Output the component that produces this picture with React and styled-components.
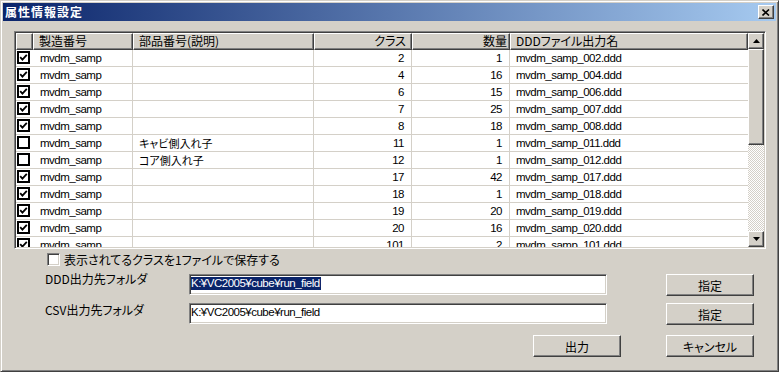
import React from 'react';
import styled, { createGlobalStyle, css } from 'styled-components';

const FACE = '#d4d0c8';
const FONT = `"Noto Sans CJK JP", "Liberation Sans", sans-serif`;
const LATIN = `"Liberation Sans", "Noto Sans CJK JP", sans-serif`;
const COLS = '17px 100px 181px 98px 98px 238px';

const Global = createGlobalStyle`
  html, body { margin: 0; padding: 0; background: ${FACE}; }
  body {
    font-family: ${FONT};
    font-size: 12px;
    color: #000;
    font-feature-settings: "palt";
  }
  * { box-sizing: border-box; }
`;

const raised = css`
  background: ${FACE};
  border: 1px solid;
  border-color: #fff #404040 #404040 #fff;
  box-shadow: inset -1px -1px #808080;
`;

const sunken = css`
  border: 1px solid;
  border-color: #808080 #fff #fff #808080;
  box-shadow: inset 1px 1px #404040, inset -1px -1px ${FACE};
`;

const latinText = css`
  font-family: ${LATIN};
  font-size: 11.5px;
  letter-spacing: -0.5px;
`;

const Window = styled.div`
  width: 779px;
  height: 372px;
  background: ${FACE};
  border: 1px solid;
  border-color: ${FACE} #404040 #404040 ${FACE};
  box-shadow: inset 1px 1px #fff, inset -1px -1px #808080;
  padding: 2px;
  display: flex;
  flex-direction: column;
`;

const TitleBar = styled.div`
  flex: none;
  height: 18px;
  background: linear-gradient(to right, #0a246a, #a6caf0);
  display: flex;
  align-items: center;
  justify-content: space-between;
  padding: 0 2px 0 2px;
`;

const Title = styled.span`
  color: #fff;
  font-weight: bold;
  font-size: 12px;
  letter-spacing: 1px;
  line-height: 18px;
`;

const CloseButton = styled.div`
  ${raised};
  width: 16px;
  height: 14px;
  display: flex;
  align-items: center;
  justify-content: center;
`;

const ListView = styled.div`
  ${sunken};
  flex: none;
  margin: 10px 0 0 11px;
  width: 752px;
  height: 218px;
  padding: 1px;
  background: #fff;
  display: flex;
`;

const Table = styled.div`
  width: 732px;
  display: flex;
  flex-direction: column;
  overflow: hidden;
`;

const HeaderRow = styled.div`
  flex: none;
  display: grid;
  grid-template-columns: ${COLS};
  height: 17px;
`;

const HeaderCell = styled.div`
  ${raised};
  line-height: 14px;
  padding: 0 ${p => p.$pr ?? 4}px 0 5px;
  text-align: ${p => (p.$right ? 'right' : 'left')};
  white-space: nowrap;
  overflow: hidden;
`;

const Rows = styled.div`
  flex: 1;
  overflow: hidden;
`;

const Row = styled.div`
  display: grid;
  grid-template-columns: ${COLS};
  height: 17px;
  border-bottom: 1px solid ${FACE};
`;

const Cell = styled.div`
  ${p => (p.$cjk ? css`font-size: 11px;` : latinText)};
  line-height: 16px;
  padding: 0 ${p => (p.$right ? 7 : 4)}px 0 ${p => p.$pl ?? 6}px;
  text-align: ${p => (p.$right ? 'right' : 'left')};
  border-right: ${p => (p.$line ? `1px solid ${FACE}` : 'none')};
  white-space: nowrap;
  overflow: hidden;
`;

const CheckCell = styled.div`
  display: flex;
  align-items: center;
  padding: 0 0 1px 1px;
`;

const ListCheck = styled.div`
  width: 13px;
  height: 13px;
  border: 2px solid #000;
  background: #fff;
  display: flex;
  align-items: center;
  justify-content: center;
`;

const ScrollBar = styled.div`
  width: 16px;
  display: flex;
  flex-direction: column;
`;

const ScrollButton = styled.div`
  ${raised};
  flex: none;
  width: 16px;
  height: 16px;
  display: flex;
  align-items: center;
  justify-content: center;
`;

const Thumb = styled.div`
  ${raised};
  flex: none;
  height: 96px;
`;

const Track = styled.div`
  flex: 1;
  background-color: #fff;
  background-image: repeating-conic-gradient(${FACE} 0 25%, #fff 0 50%);
  background-size: 2px 2px;
`;

const OptionRow = styled.div`
  flex: none;
  display: flex;
  align-items: center;
  gap: 4px;
  margin: 4px 0 0 44px;
  height: 13px;
  line-height: 13px;
`;

const Box3D = styled.div`
  ${sunken};
  width: 13px;
  height: 13px;
  background: #fff;
`;

const FormRow = styled.div`
  flex: none;
  display: grid;
  grid-template-columns: 186px 418px 59px 88px;
  align-items: start;
  margin-top: ${p => p.$top}px;
`;

const FieldLabel = styled.div`
  padding-left: 42px;
  line-height: 13px;
  margin-top: ${p => p.$offset ?? 0}px;
  white-space: nowrap;
`;

const TextBox = styled.div`
  ${sunken};
  ${latinText};
  height: 21px;
  background: #fff;
  padding: 2px 1px 0 1px;
  line-height: 13px;
  white-space: nowrap;
  overflow: hidden;
`;

const Selected = styled.span`
  display: inline-block;
  line-height: 13px;
  padding-right: 1px;
  background: #0a246a;
  color: #fff;
`;

const Button = styled.div`
  ${raised};
  grid-column: ${p => p.$col ?? 'auto'};
  width: 88px;
  height: 22px;
  display: flex;
  align-items: center;
  justify-content: center;
  line-height: 13px;
`;

const ButtonRow = styled.div`
  flex: none;
  display: flex;
  gap: 45px;
  padding-left: 530px;
  margin-top: ${p => p.$top}px;
`;

const CheckMark = () => (
  <svg width="9" height="9" viewBox="0 0 9 9">
    <path d="M1.2 4.2 L3.4 6.6 L7.8 1.8" fill="none" stroke="#000" strokeWidth="1.8" />
  </svg>
);

const CloseIcon = () => (
  <svg width="8" height="7" viewBox="0 0 8 7">
    <path d="M0.5 0.5 L7 6.5 M7 0.5 L0.5 6.5" stroke="#000" strokeWidth="1.6" />
  </svg>
);

const Arrow = ({ down }) => (
  <svg width="7" height="4" viewBox="0 0 7 4">
    {down ? <path d="M0 0 H7 L3.5 4 Z" fill="#000" /> : <path d="M0 4 H7 L3.5 0 Z" fill="#000" />}
  </svg>
);

const rows = [
  [true, '', 2, 1, '002'],
  [true, '', 4, 16, '004'],
  [true, '', 6, 15, '006'],
  [true, '', 7, 25, '007'],
  [true, '', 8, 18, '008'],
  [false, 'キャビ側入れ子', 11, 1, '011'],
  [false, 'コア側入れ子', 12, 1, '012'],
  [true, '', 17, 42, '017'],
  [true, '', 18, 1, '018'],
  [true, '', 19, 20, '019'],
  [true, '', 20, 16, '020'],
  [true, '', 101, 2, '101'],
];

export default function App() {
  return (
    <>
      <Global />
      <Window>
        <TitleBar>
          <Title>属性情報設定</Title>
          <CloseButton><CloseIcon /></CloseButton>
        </TitleBar>

        <ListView>
          <Table>
            <HeaderRow>
              <HeaderCell />
              <HeaderCell>製造番号</HeaderCell>
              <HeaderCell>部品番号(説明)</HeaderCell>
              <HeaderCell $right $pr={5}>クラス</HeaderCell>
              <HeaderCell $right $pr={2}>数量</HeaderCell>
              <HeaderCell>DDDファイル出力名</HeaderCell>
            </HeaderRow>
            <Rows>
              {rows.map(([checked, desc, cls, qty, id], i) => (
                <Row key={i}>
                  <CheckCell>
                    <ListCheck>{checked && <CheckMark />}</ListCheck>
                  </CheckCell>
                  <Cell $pl={7} $line>mvdm_samp</Cell>
                  <Cell $cjk $line>{desc}</Cell>
                  <Cell $right $line>{cls}</Cell>
                  <Cell $right $line>{qty}</Cell>
                  <Cell>{`mvdm_samp_${id}.ddd`}</Cell>
                </Row>
              ))}
            </Rows>
          </Table>
          <ScrollBar>
            <ScrollButton><Arrow /></ScrollButton>
            <Thumb />
            <Track />
            <ScrollButton><Arrow down /></ScrollButton>
          </ScrollBar>
        </ListView>

        <OptionRow>
          <Box3D />
          <span>表示されてるクラスを1ファイルで保存する</span>
        </OptionRow>

        <FormRow $top={8}>
          <FieldLabel $offset={-2}>DDD出力先フォルダ</FieldLabel>
          <TextBox><Selected>K:¥VC2005¥cube¥run_field</Selected></TextBox>
          <Button $col={4}>指定</Button>
        </FormRow>

        <FormRow $top={7}>
          <FieldLabel $offset={0}>CSV出力先フォルダ</FieldLabel>
          <TextBox>K:¥VC2005¥cube¥run_field</TextBox>
          <Button $col={4}>指定</Button>
        </FormRow>

        <ButtonRow $top={10}>
          <Button>出力</Button>
          <Button>キャンセル</Button>
        </ButtonRow>
      </Window>
    </>
  );
}
